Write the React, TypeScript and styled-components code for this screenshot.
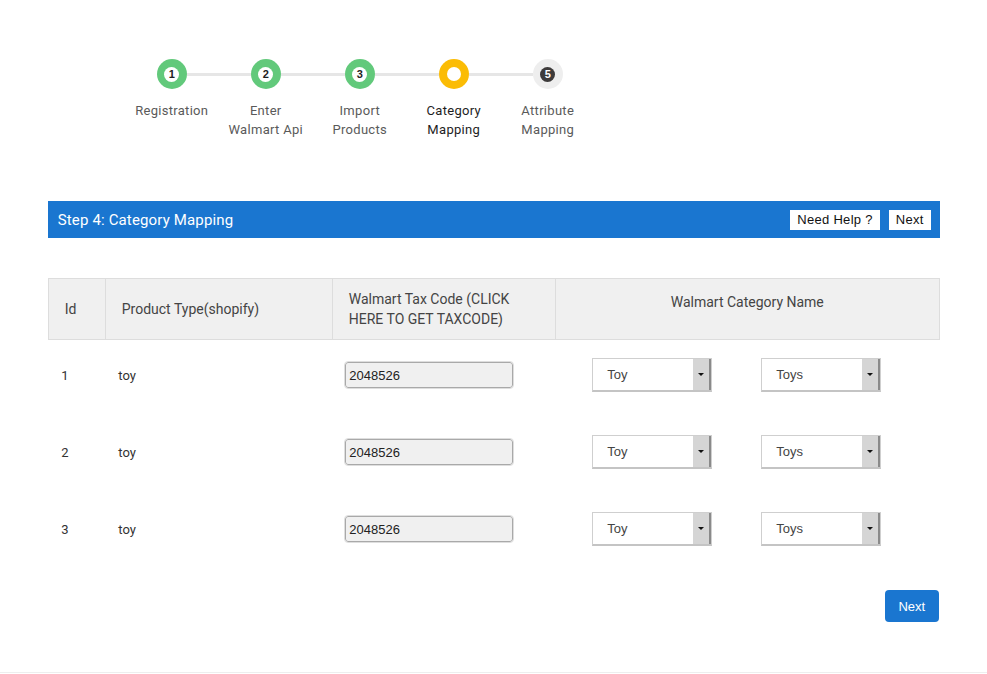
import { FC } from "react";
import styled, { createGlobalStyle } from "styled-components";

type StepState = "done" | "active" | "todo";

type Step = {
  num: number;
  label: string[];
  state: StepState;
};

const steps: Step[] = [
  { num: 1, label: ["Registration"], state: "done" },
  { num: 2, label: ["Enter", "Walmart Api"], state: "done" },
  { num: 3, label: ["Import", "Products"], state: "done" },
  { num: 4, label: ["Category", "Mapping"], state: "active" },
  { num: 5, label: ["Attribute", "Mapping"], state: "todo" },
];

const rows = [
  { id: 1, type: "toy", tax: "2048526", cat: "Toy", sub: "Toys" },
  { id: 2, type: "toy", tax: "2048526", cat: "Toy", sub: "Toys" },
  { id: 3, type: "toy", tax: "2048526", cat: "Toy", sub: "Toys" },
];

const Stepper: FC = () => (
  <StepRow>
    {steps.map((s, i) => (
      <StepItem key={s.num}>
        <StepTrack>
          <Connector $hidden={i === 0} />
          <Circle $state={s.state}>
            <Dot $state={s.state}>{s.state !== "active" && s.num}</Dot>
          </Circle>
          <Connector $hidden={i === steps.length - 1} />
        </StepTrack>
        <StepLabel $active={s.state === "active"}>
          {s.label.map((l) => (
            <div key={l}>{l}</div>
          ))}
        </StepLabel>
      </StepItem>
    ))}
  </StepRow>
);

const Select: FC<{ value: string }> = ({ value }) => (
  <SelectBox>
    <SelectText>{value}</SelectText>
    <SelectArrow />
  </SelectBox>
);

export default function App() {
  return (
    <>
      <GlobalStyle />
      <Page>
        <Stepper />

        <PanelBar>
          <PanelTitle>Step 4: Category Mapping</PanelTitle>
          <BarButtons>
            <BarButton>Need Help ?</BarButton>
            <BarButton>Next</BarButton>
          </BarButtons>
        </PanelBar>

        <MapTable>
          <colgroup>
            <col style={{ width: 57 }} />
            <col style={{ width: 227 }} />
            <col style={{ width: 223 }} />
            <col />
          </colgroup>
          <thead>
            <tr>
              <Th>Id</Th>
              <Th>Product Type(shopify)</Th>
              <Th>
                Walmart Tax Code (CLICK
                <br />
                HERE TO GET TAXCODE)
              </Th>
              <Th $center>Walmart Category Name</Th>
            </tr>
          </thead>
          <tbody>
            {rows.map((r) => (
              <tr key={r.id}>
                <Td>{r.id}</Td>
                <Td>{r.type}</Td>
                <Td>
                  <TaxInput readOnly value={r.tax} />
                </Td>
                <Td>
                  <SelectPair>
                    <Select value={r.cat} />
                    <Select value={r.sub} />
                  </SelectPair>
                </Td>
              </tr>
            ))}
          </tbody>
        </MapTable>

        <Footer>
          <PrimaryButton>Next</PrimaryButton>
        </Footer>
      </Page>
      <BottomRule />
    </>
  );
}

const GlobalStyle = createGlobalStyle`
  html, body {
    margin: 0;
    padding: 0;
    background: #fff;
  }
  body {
    font-family: Roboto, "Noto Sans", sans-serif;
    color: #333;
  }
`;

const Page = styled.div`
  width: 892px;
  margin: 0 auto;
  padding-top: 59px;
  padding-left: 0.5px;
`;

const StepRow = styled.div`
  display: flex;
  margin-left: 77px;
`;

const StepItem = styled.div`
  width: 94px;
  display: flex;
  flex-direction: column;
  align-items: center;
`;

const StepTrack = styled.div`
  width: 100%;
  display: flex;
  align-items: center;
`;

const Connector = styled.div<{ $hidden: boolean }>`
  flex: 1;
  height: 3px;
  background: ${(p) => (p.$hidden ? "transparent" : "#e6e6e6")};
`;

const circleBg: Record<StepState, string> = {
  done: "#62c97b",
  active: "#fbbc05",
  todo: "#eeeeee",
};

const Circle = styled.div<{ $state: StepState }>`
  width: 30px;
  height: 30px;
  border-radius: 50%;
  background: ${(p) => circleBg[p.$state]};
  display: flex;
  align-items: center;
  justify-content: center;
`;

const Dot = styled.div<{ $state: StepState }>`
  width: ${(p) => (p.$state === "active" ? 14 : 15)}px;
  height: ${(p) => (p.$state === "active" ? 14 : 15)}px;
  border-radius: 50%;
  background: ${(p) => (p.$state === "todo" ? "#3d3b3b" : "#fff")};
  color: ${(p) => (p.$state === "todo" ? "#fff" : "#222")};
  font-family: "Liberation Sans", Arial, sans-serif;
  font-size: 11px;
  font-weight: bold;
  line-height: 15px;
  text-align: center;
`;

const StepLabel = styled.div<{ $active: boolean }>`
  margin-top: 12px;
  font-size: 13px;
  line-height: 19px;
  letter-spacing: 0.3px;
  text-align: center;
  color: ${(p) => (p.$active ? "#1e1e1e" : "#5a5a5a")};
  white-space: nowrap;
`;

const PanelBar = styled.div`
  margin-top: 62px;
  height: 37px;
  background: #1a76d0;
  display: flex;
  align-items: center;
  justify-content: space-between;
  padding: 0 9px 0 10px;
`;

const PanelTitle = styled.div`
  color: #fff;
  font-size: 15px;
  letter-spacing: 0.15px;
`;

const BarButtons = styled.div`
  display: flex;
  gap: 9px;
`;

const BarButton = styled.button`
  height: 20px;
  padding: 0 7px;
  border: none;
  background: #fff;
  color: #111;
  font-family: "Liberation Sans", Arial, sans-serif;
  font-size: 13px;
  letter-spacing: 0.3px;
  line-height: 20px;
  cursor: pointer;
`;

const MapTable = styled.table`
  width: 100%;
  margin-top: 40px;
  border-collapse: collapse;
  table-layout: fixed;
`;

const Th = styled.th<{ $center?: boolean }>`
  height: 61px;
  padding: 0 0 0 ${(p) => (p.$center ? 0 : 16)}px;
  box-sizing: border-box;
  background: #f0f0f0;
  border: 1px solid #dddddd;
  color: #444;
  font-size: 14px;
  font-weight: normal;
  line-height: 20px;
  text-align: ${(p) => (p.$center ? "center" : "left")};
  vertical-align: middle;
  padding-bottom: ${(p) => (p.$center ? 14 : 0)}px;
`;

const Td = styled.td`
  padding: 18px 0 25px 13px;
  height: 34px;
  font-size: 13px;
  color: #333;
  vertical-align: middle;
`;

const TaxInput = styled.input`
  box-sizing: border-box;
  display: block;
  width: 168px;
  height: 26px;
  padding: 0 3px;
  background: #f0f0f0;
  border: 1px solid #a9a9a9;
  border-radius: 3px;
  outline: 1px solid #dedede;
  font-family: "Liberation Sans", Arial, sans-serif;
  font-size: 13px;
  color: #222;
`;

const SelectPair = styled.div`
  display: flex;
  gap: 49px;
  padding-left: 24px;
`;

const SelectBox = styled.div`
  box-sizing: border-box;
  width: 120px;
  height: 34px;
  display: flex;
  align-items: stretch;
  background: #fff;
  border: 1px solid #cfcfcf;
  border-bottom: 2px solid #c4c4c4;
`;

const SelectText = styled.div`
  flex: 1;
  padding-left: 14px;
  display: flex;
  align-items: center;
  font-family: "Liberation Sans", Arial, sans-serif;
  font-size: 13px;
  color: #444;
`;

const SelectArrow = styled.div`
  width: 16px;
  background: #d5d5d5;
  border-right: 2px solid #8a8a8a;
  display: flex;
  align-items: center;
  justify-content: center;

  &::after {
    content: "";
    border-left: 3px solid transparent;
    border-right: 3px solid transparent;
    border-top: 3px solid #111;
  }
`;

const Footer = styled.div`
  display: flex;
  justify-content: flex-end;
  margin-top: 19px;
  padding-right: 1px;
`;

const PrimaryButton = styled.button`
  width: 54px;
  height: 32px;
  border: none;
  border-radius: 4px;
  background: #1a76d0;
  color: #fff;
  font-family: "Liberation Sans", Arial, sans-serif;
  font-size: 13px;
  cursor: pointer;
`;

const BottomRule = styled.div`
  margin-top: 50px;
  height: 1px;
  background: #eeeeee;
`;
